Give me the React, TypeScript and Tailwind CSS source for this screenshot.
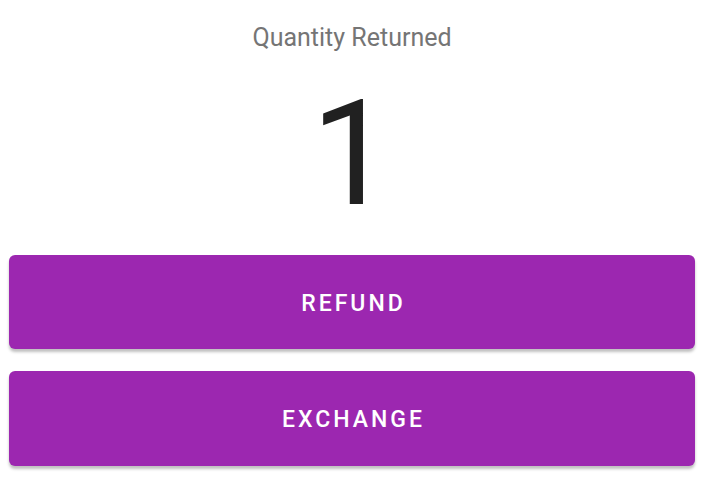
import React from 'react';

const App = () => {
  return (
    <div className="w-[712px] h-[490px] bg-white font-['Roboto',sans-serif] pr-[8px]">
      <div className="flex flex-col items-center">
        <div className="mt-[23px] text-[25px] leading-[30px] text-[#757575]">Quantity Returned</div>
        <div className="mt-[32px] text-[146px] leading-[140px] text-[#212121]">1</div>

        {/* Actions */}
        <div className="mt-[30px] w-full px-[9px] flex flex-col gap-[22px]">
          <button className="h-[94px] w-full rounded-[6px] bg-[#9c27b0] text-white text-[23px] font-medium tracking-[0.13em] pl-[3px] pt-[4px] shadow-[0_3px_3px_rgba(0,0,0,0.25)]">
            REFUND
          </button>
          <button className="h-[95px] w-full rounded-[6px] bg-[#9c27b0] text-white text-[23px] font-medium tracking-[0.13em] pl-[3px] pt-[4px] shadow-[0_3px_3px_rgba(0,0,0,0.25)]">
            EXCHANGE
          </button>
        </div>
      </div>
    </div>
  );
};

export default App;
